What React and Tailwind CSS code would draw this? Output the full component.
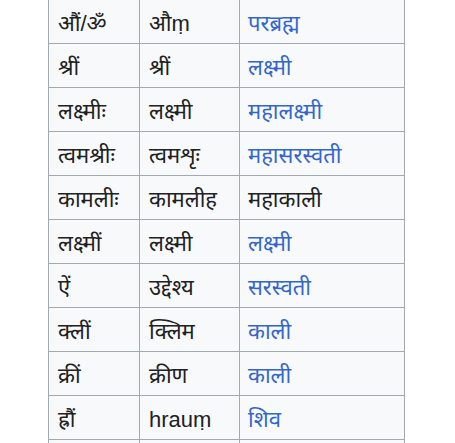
import React from 'react';

const rows = [
  ['औं/ॐ', 'औṃ', 'परब्रह्म', true],
  ['श्रीं', 'श्रीं', 'लक्ष्मी', true],
  ['लक्ष्मीः', 'लक्ष्मी', 'महालक्ष्मी', true],
  ['त्वमश्रीः', 'त्वमशृः', 'महासरस्वती', true],
  ['कामलीः', 'कामलीह', 'महाकाली', false],
  ['लक्ष्मीं', 'लक्ष्मी', 'लक्ष्मी', true],
  ['ऐं', 'उद्देश्य', 'सरस्वती', true],
  ['क्लीं', 'क्लिम', 'काली', true],
  ['क्रीं', 'क्रीण', 'काली', true],
  ['ह्रौं', 'hrauṃ', 'शिव', true],
  ['', '', '', false],
];

const App = () => {
  return (
    <div className="w-[455px] h-[443px] overflow-hidden bg-white font-['Liberation_Sans','Noto_Sans',sans-serif] text-[22px] text-[#202122]">
      <div className="ml-[48px] mt-[-1px] w-[357px] border-l border-[#a2a9b1]">
        {rows.map(([a, b, c, link], i) => (
          <div key={i} className="flex h-[44px] border-t border-[#a2a9b1] bg-[#f8f9fa]">
            <div className="w-[91px] border-r border-[#a2a9b1] pl-[9px] pt-[4px] flex items-center">{a}</div>
            <div className="w-[100px] border-r border-[#a2a9b1] pl-[9px] pt-[4px] flex items-center">{b}</div>
            <div className={`w-[165px] border-r border-[#a2a9b1] pl-[8px] pt-[4px] flex items-center ${link ? 'text-[#3366cc]' : ''}`}>{c}</div>
          </div>
        ))}
      </div>
    </div>
  );
};

export default App;
